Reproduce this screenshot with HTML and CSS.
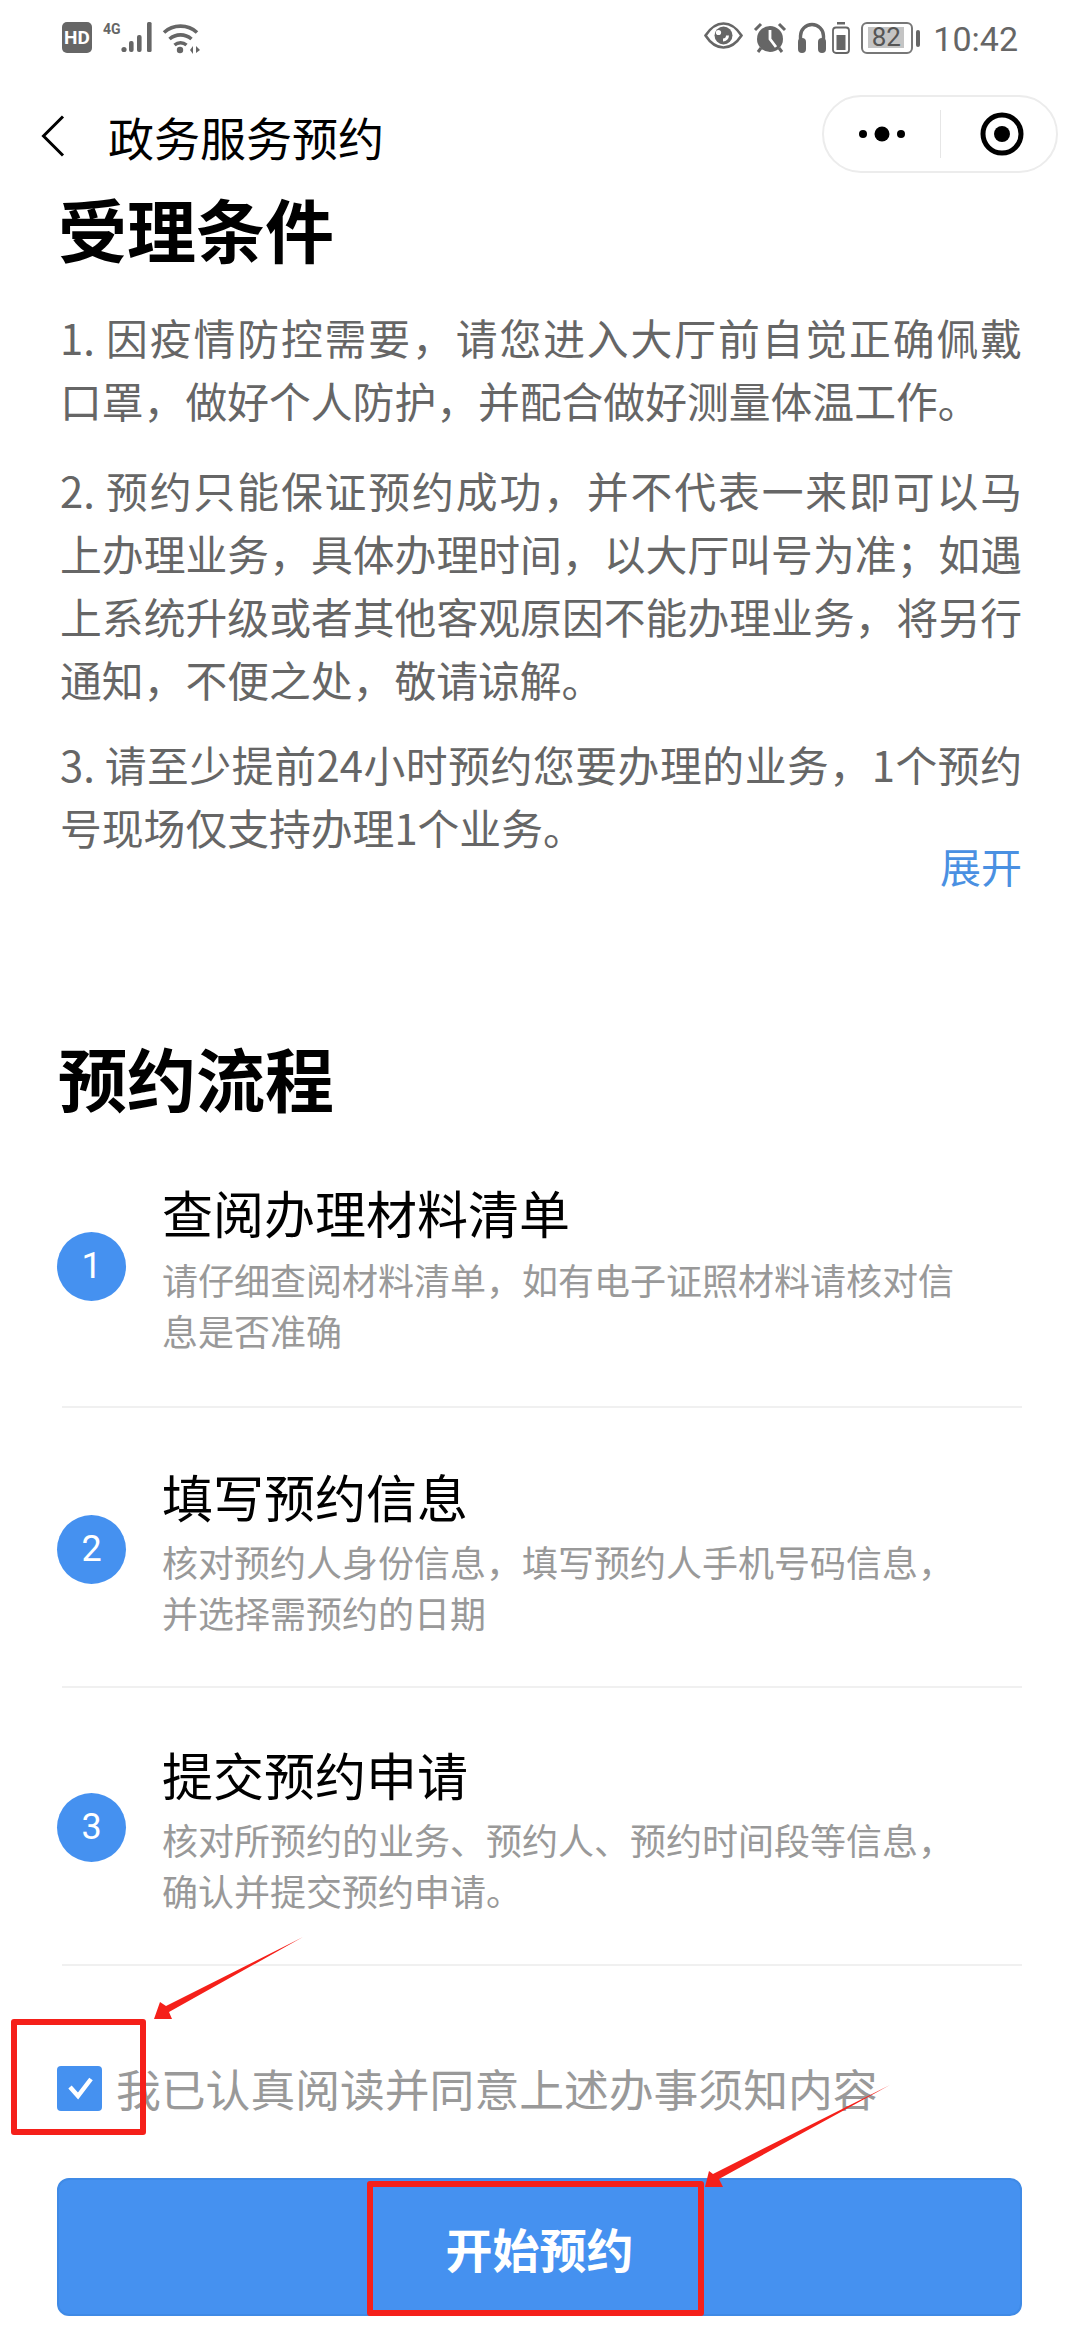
FILE: index.html
```html
<!DOCTYPE html>
<html lang="zh-CN">
<head>
<meta charset="utf-8">
<title>政务服务预约</title>
<link rel="stylesheet" href="styles.css">
</head>
<body>
<div class="page">
  <header class="status">
    <div class="status-left">
      <span class="hd">HD</span>
      <div class="signal">
        <span class="net">4G</span>
        <svg class="bars" width="32" height="31" viewBox="0 0 32 31"><circle cx="3" cy="27.5" r="2.6"/><rect x="8" y="19" width="4.6" height="11" rx="2"/><rect x="16" y="13" width="4.6" height="17" rx="2"/><rect x="26" y="0" width="4.6" height="30" rx="1.5"/></svg>
      </div>
      <svg class="wifi" width="39" height="32" viewBox="0 0 39 32"><path d="M2 10.5C11 2 26 2 35 10.5" fill="none" stroke="#666" stroke-width="3.6"/><path d="M7.5 17C14 11.5 23 11.5 29.5 17" fill="none" stroke="#666" stroke-width="3.6"/><path d="M12.5 23C16 20 21 20 24.5 23" fill="none" stroke="#666" stroke-width="3.4"/><circle cx="18" cy="28" r="3.2" fill="#666"/><path d="M28 28l3-4v8zM34 24l4 4-4 3z" fill="#666"/></svg>
    </div>
    <div class="status-right">
      <svg width="39" height="27" viewBox="0 0 39 27"><path d="M1.5 13.5C8 3.5 14 1.5 19.5 1.5S31 3.500 37.500 13.500C31 23.500 25 25.500 19.500 25.500S8 23.500 1.500 13.500Z" fill="none" stroke="#666" stroke-width="2.6"/><circle cx="19.500" cy="13.500" r="9" fill="#666"/><circle cx="14.500" cy="10.500" r="2.600" fill="#fff"/><path d="M19 19.500a6 6 0 0 0 6-6h-3a3 3 0 0 1-3 3z" fill="#fff"/></svg>
      <svg class="alarm" width="34" height="32" viewBox="0 0 34 32"><circle cx="17" cy="17" r="13" fill="#666"/><path d="M17 8v9l6 8" fill="none" stroke="#fff" stroke-width="2.800"/><path d="M2 8l6-6M32 8l-6-6M5 30l3-4M29 30l-3-4" stroke="#666" stroke-width="3"/></svg>
      <svg class="phones" width="30" height="31" viewBox="0 0 30 31"><path d="M3.500 20V14a11.500 11.500 0 0 1 23 0v6" fill="none" stroke="#666" stroke-width="3.400"/><rect x="1" y="16" width="8" height="15" rx="4" fill="#666"/><rect x="21" y="16" width="8" height="15" rx="4" fill="#666"/></svg>
      <svg class="cell" width="18" height="32" viewBox="0 0 18 32"><rect x="5" y="0" width="8" height="2.500" fill="#666"/><rect x="1" y="5.500" width="16" height="25.500" rx="3" fill="none" stroke="#666" stroke-width="1.800"/><rect x="4.500" y="13" width="9" height="15" fill="#666"/></svg>
      <div class="battery"><span class="battery-level">82</span></div>
      <span class="battery-nub"></span>
      <span class="time">10:42</span>
    </div>
  </header>

  <nav class="nav">
    <svg class="back" width="24" height="42" viewBox="0 0 24 42"><path d="M22 1.500L2.500 21 22 40.500" fill="none" stroke="#000" stroke-width="3"/></svg>
    <h1 class="nav-title">政务服务预约</h1>
    <div class="capsule">
      <div class="capsule-cell">
        <svg width="46" height="16" viewBox="0 0 46 16"><circle cx="4" cy="8" r="4"/><circle cx="23" cy="8" r="7.500"/><circle cx="42" cy="8" r="4"/></svg>
      </div>
      <span class="capsule-line"></span>
      <div class="capsule-cell capsule-cell-target">
        <svg width="44" height="44" viewBox="0 0 44 44"><circle cx="22" cy="22" r="19" fill="none" stroke="#000" stroke-width="5"/><circle cx="22" cy="22" r="8"/></svg>
      </div>
    </div>
  </nav>

  <main class="content">
    <h2 class="heading heading-top">受理条件</h2>
    <p class="para para-first"><span class="line">1. 因疫情防控需要，请您进入大厅前自觉正确佩戴</span><span class="line-end">口罩，做好个人防护，并配合做好测量体温工作。</span></p>
    <p class="para para-second"><span class="line">2. 预约只能保证预约成功，并不代表一来即可以马</span><span class="line">上办理业务，具体办理时间，以大厅叫号为准；如遇</span><span class="line">上系统升级或者其他客观原因不能办理业务，将另行</span><span class="line-end">通知，不便之处，敬请谅解。</span></p>
    <p class="para para-third"><span class="line">3. 请至少提前24小时预约您要办理的业务，1个预约</span><span class="line-end">号现场仅支持办理1个业务。</span></p>
    <div class="expand">展开</div>

    <h2 class="heading heading-flow">预约流程</h2>
    <section class="steps">
      <div class="step">
        <span class="step-num">1</span>
        <div class="step-body">
          <h3 class="step-title">查阅办理材料清单</h3>
          <p class="step-desc">请仔细查阅材料清单，如有电子证照材料请核对信息是否准确</p>
        </div>
      </div>
      <div class="step">
        <span class="step-num">2</span>
        <div class="step-body">
          <h3 class="step-title">填写预约信息</h3>
          <p class="step-desc">核对预约人身份信息，填写预约人手机号码信息，并选择需预约的日期</p>
        </div>
      </div>
      <div class="step">
        <span class="step-num">3</span>
        <div class="step-body">
          <h3 class="step-title">提交预约申请</h3>
          <p class="step-desc">核对所预约的业务、预约人、预约时间段等信息，确认并提交预约申请。</p>
        </div>
      </div>
    </section>

    <label class="agree">
      <span class="check"><svg width="26" height="24" viewBox="0 0 26 24"><path d="M3 11l8 9L24 3" fill="none" stroke="#fff" stroke-width="4.500"/></svg></span>
      <span class="agree-text">我已认真阅读并同意上述办事须知内容</span>
    </label>
    <button class="submit">开始预约</button>
  </main>

  <div class="mark mark-check"></div>
  <div class="mark mark-submit"></div>
  <svg class="arrows" width="1080" height="2340" viewBox="0 0 1080 2340">
    <path d="M303 1937L169 2012 172 2019 154 2019 160 2002 166 2006Z" fill="#f5201a"/>
    <path d="M890 2085L719 2179 723 2187 705 2187 709 2171 713 2174Z" fill="#f5201a"/>
  </svg>
</div>
</body>
</html>
```
FILE: styles.css
```css
* { box-sizing: border-box; }
html, body { margin: 0; padding: 0; background: #fff; }
body { font-family: "Noto Sans CJK SC", "Noto Sans", sans-serif; color: #000; }
.page { position: relative; width: 1080px; height: 2340px; overflow: hidden; }

.status { height: 78px; padding: 22px 62px 0 62px; display: flex; justify-content: space-between; align-items: flex-start; color: #666; }
.status-left, .status-right { display: flex; align-items: flex-start; }
.hd { width: 30px; height: 31px; background: #666; color: #fff; border-radius: 5px; font: 700 19px/31px "Roboto", sans-serif; text-align: center; }
.signal { display: flex; margin-left: 11px; }
.net { font: 700 14px/14px "Roboto", sans-serif; width: 18px; color: #666; }
.bars { fill: #666; }
.wifi { margin-left: 9px; }
.status-right svg { margin-right: 10px; }
.status-right .phones { margin-right: 5px; }
.status-right .cell { margin-right: 11px; }
.battery { width: 52px; height: 32px; border: 2.5px solid #777; border-radius: 6px; padding: 3px 5px; }
.battery-level { display: block; width: 36px; height: 21px; background: #c4c4c4; font: 400 26px/21px "Roboto", sans-serif; text-align: center; color: #555; }
.battery-nub { width: 4px; height: 17px; background: #666; margin: 8px 0 0 3px; border-radius: 2px; }
.time { font: 400 34px/34px "Roboto", sans-serif; color: #666; margin-left: 13px; }

.nav { height: 116px; position: relative; display: flex; align-items: center; padding-left: 41px; }
.nav-title { margin: 0 0 0 43px; font-size: 46px; line-height: 60px; font-weight: 400; }
.capsule { position: absolute; left: 822px; top: 17px; width: 236px; height: 78px; border: 2px solid #ececec; border-radius: 39px; display: flex; align-items: center; }
.capsule-cell { flex: 1; display: flex; justify-content: center; align-items: center; }
.capsule-cell-target svg { margin-left: 7px; }
.capsule-line { width: 1px; height: 48px; background: #e6e6e6; }

.content { padding: 0 57px; }
.heading { margin: 0; padding-left: 1px; font-size: 69px; line-height: 76px; font-weight: 700; }
.heading-top { margin-top: -4px; }
.para { margin: 0; padding-left: 3px; font-size: 41.8px; line-height: 63px; color: #666; width: 965px; }
.para-first { margin-top: 40px; }
.para-second { margin-top: 27px; }
.para-third { margin-top: 22px; }
.line { display: block; white-space: nowrap; text-align: justify; text-align-last: justify; }
.line-end { display: block; white-space: nowrap; }
.expand { margin-top: -24px; text-align: right; font-size: 41px; line-height: 60px; color: #4a90e2; width: 965px; }
.heading-flow { margin-top: 144px; }

.steps { margin-top: 62px; }
.step { display: flex; align-items: center; width: 960px; margin-left: 5px; padding: 0 0 48px; border-bottom: 2px solid #f0f0f0; }
.step:first-child { padding-bottom: 50px; }
.step:nth-child(2) { padding-top: 53px; }
.step:last-child { padding-top: 51px; }
.step-num { flex: none; width: 69px; height: 69px; margin-left: -5px; border-radius: 50%; background: #4591f0; color: #fff; font: 400 36px/69px "Roboto", sans-serif; text-align: center; }
.step-body { margin-left: 36px; }
.step-title { margin: 0; font-size: 51px; line-height: 70px; font-weight: 400; }
.step-desc { margin: 5px 0 0; font-size: 36px; line-height: 51px; color: #999; width: 800px; }
.step:first-child .step-desc { margin-top: 7px; }

.agree { display: flex; align-items: center; margin-top: 92px; height: 60px; }
.check { width: 45px; height: 45px; flex: none; background: #4591f0; border-radius: 4px; display: flex; align-items: center; justify-content: center; }
.agree-text { font-size: 44.8px; line-height: 60px; color: #999; margin-left: 14px; white-space: nowrap; }
.submit { display: block; margin-top: 60px; width: 965px; height: 138px; border: 2px solid #3f8ae6; border-radius: 12px; background: #4591f0; color: #fff; font-family: inherit; font-size: 47px; font-weight: 700; }

.mark { position: absolute; border: 6px solid #f5201a; border-radius: 3px; }
.mark-check { left: 11px; top: 2019px; width: 135px; height: 116px; }
.mark-submit { left: 367px; top: 2181px; width: 337px; height: 135px; }
.arrows { position: absolute; left: 0; top: 0; pointer-events: none; }
```
